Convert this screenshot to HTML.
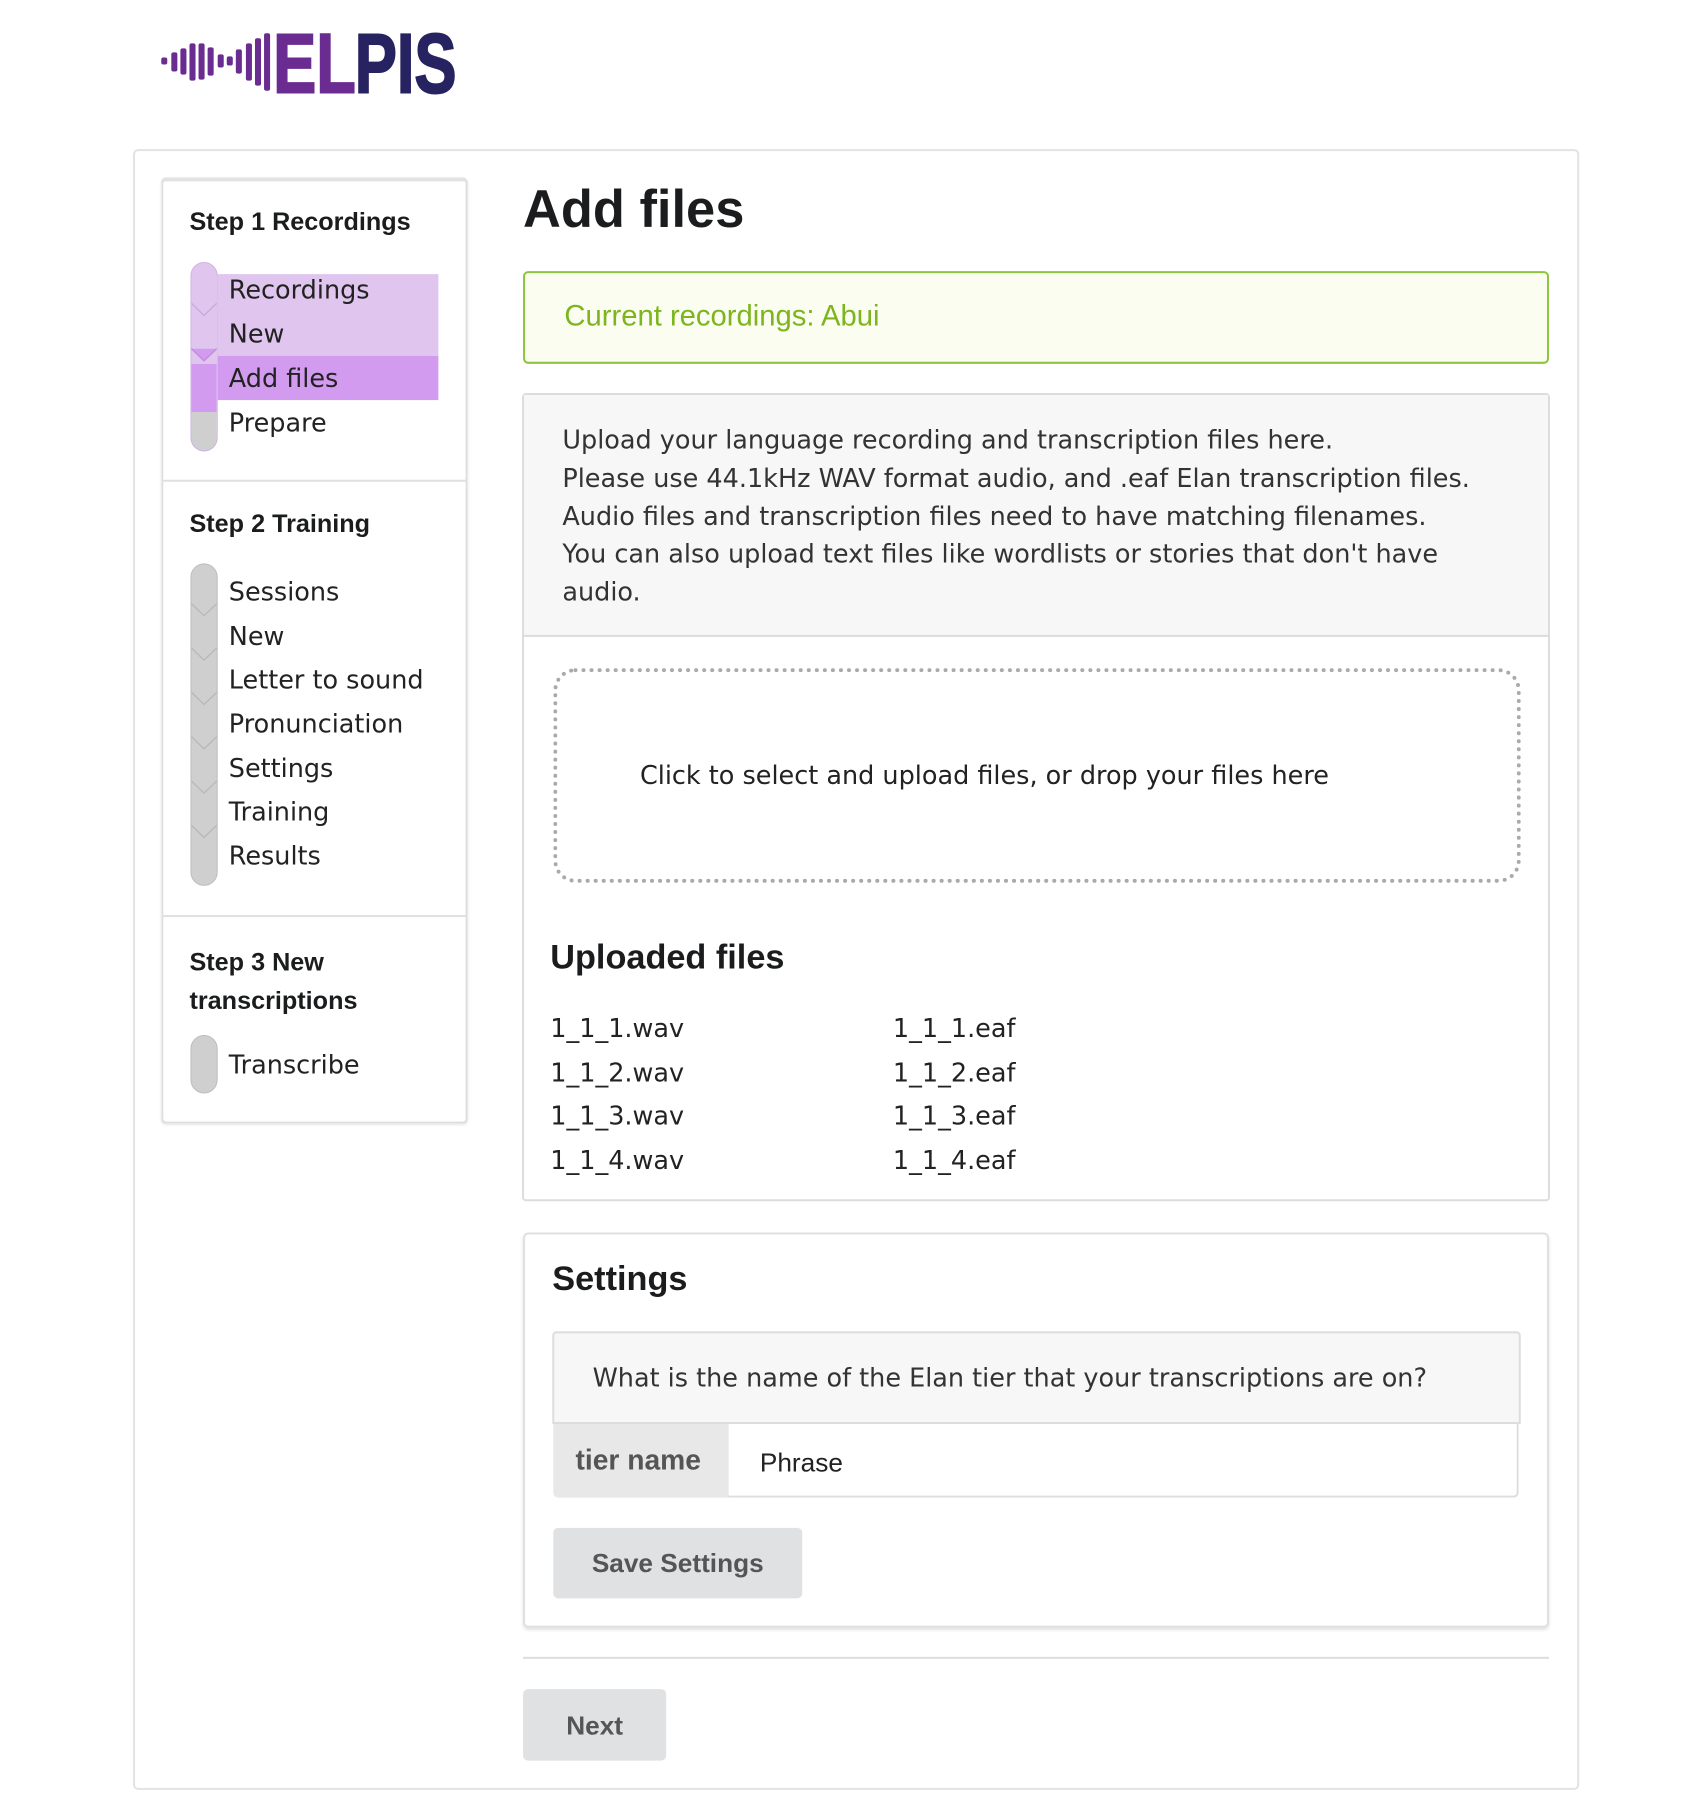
<!DOCTYPE html>
<html><head><meta charset="utf-8"><style>
*{margin:0;padding:0;box-sizing:border-box}
body{width:1708px;height:1798px;background:#fff;position:relative;overflow:hidden;font-family:"Liberation Sans",sans-serif;color:#222}
#w{position:absolute;left:0;top:0;width:1708px;height:1798px;transform:scale(1.0078);transform-origin:0 0}
.a{position:absolute}
.m{font-family:"DejaVu Sans",sans-serif;font-size:25.3px;color:#222;white-space:nowrap}
.h{font-family:"Liberation Sans",sans-serif;font-weight:bold;color:#1b1c1d;white-space:nowrap}
.bar{position:absolute;left:189px;width:27px;background:#cfcfcf;border:1.5px solid #bdbdbd;border-radius:14px}
.chev{position:absolute;left:189px;width:27px;height:14px}
.li{position:absolute;left:227px;line-height:44px;height:44px}
</style></head><body><div id="w">

<svg class="a" style="left:155px;top:25px" width="305" height="75" viewBox="155 25 305 75">
<g fill="#6a2c91">
<rect x="160" y="57" width="6" height="7" rx="2"/>
<rect x="170" y="52" width="6" height="19" rx="2"/>
<rect x="179" y="48" width="6" height="26" rx="2"/>
<rect x="188" y="43" width="6" height="37" rx="2"/>
<rect x="197" y="43" width="6" height="36" rx="2"/>
<rect x="206" y="47" width="6" height="28" rx="2"/>
<rect x="216" y="54" width="6" height="13" rx="2"/>
<rect x="225" y="56" width="6" height="9" rx="2"/>
<rect x="234" y="49" width="6" height="24" rx="2"/>
<rect x="244" y="43" width="6" height="37" rx="2"/>
<rect x="253" y="38" width="6" height="47" rx="2"/>
<rect x="262" y="33" width="6" height="57" rx="2"/>
</g>
<text x="271" y="92" font-family="Liberation Sans" font-weight="bold" font-size="84" fill="#6a2c91" stroke="#6a2c91" stroke-width="2" textLength="82" lengthAdjust="spacingAndGlyphs">EL</text>
<text x="352" y="92" font-family="Liberation Sans" font-weight="bold" font-size="84" fill="#272361" stroke="#272361" stroke-width="2" textLength="101" lengthAdjust="spacingAndGlyphs">PIS</text>
</svg>

<div class="a" style="left:132px;top:148px;width:1435px;height:1628px;border:2px solid #e3e3e3;border-radius:5px"></div>

<div class="a" style="left:160px;top:176px;width:304px;height:939px;border:2px solid #dedede;border-top:4px solid #e2e2e2;border-radius:5px;box-shadow:0 1px 2px rgba(0,0,0,.1)"></div>
<div class="a" style="left:161px;top:476px;width:302px;height:2px;background:#e0e0e0"></div>
<div class="a" style="left:161px;top:908px;width:302px;height:2px;background:#e0e0e0"></div>

<div class="a h" style="left:188px;top:206px;font-size:25px">Step 1 Recordings</div>
<div class="a" style="left:216px;top:272px;width:219px;height:81px;background:#e0c6ef"></div>
<div class="a" style="left:216px;top:353px;width:219px;height:44px;background:#d29bef"></div>
<div class="bar" style="top:260px;height:188px;background:linear-gradient(#e0c6ef 0,#e0c6ef 100px,#d29bef 100px,#d29bef 148px,#cfcfcf 148px);border-color:#cfb3e0"></div>
<svg class="chev" style="top:300px" viewBox="0 0 27 14"><path d="M1 1 L13.5 13 L26 1" fill="none" stroke="#c9addb" stroke-width="1.5"/></svg>
<svg class="chev" style="top:345px" viewBox="0 0 27 14"><path d="M1 1 L13.5 13 L26 1" fill="#d29bef" stroke="#c48ee0" stroke-width="1.5"/></svg>
<svg class="chev" style="top:395px" viewBox="0 0 27 14"><path d="M1 0 L13.5 13 L26 0 Z" fill="#d29bef"/></svg>
<div class="li m" style="top:266px">Recordings</div>
<div class="li m" style="top:310px">New</div>
<div class="li m" style="top:354px">Add files</div>
<div class="li m" style="top:398px">Prepare</div>

<div class="a h" style="left:188px;top:506px;font-size:25px">Step 2 Training</div>
<div class="bar" style="top:559px;height:320px"></div>
<svg class="chev" style="top:598px" viewBox="0 0 27 14"><path d="M1 1 L13.5 13 L26 1" fill="none" stroke="#b8b8b8" stroke-width="1.3"/></svg>
<svg class="chev" style="top:642px" viewBox="0 0 27 14"><path d="M1 1 L13.5 13 L26 1" fill="none" stroke="#b8b8b8" stroke-width="1.3"/></svg>
<svg class="chev" style="top:686px" viewBox="0 0 27 14"><path d="M1 1 L13.5 13 L26 1" fill="none" stroke="#b8b8b8" stroke-width="1.3"/></svg>
<svg class="chev" style="top:730px" viewBox="0 0 27 14"><path d="M1 1 L13.5 13 L26 1" fill="none" stroke="#b8b8b8" stroke-width="1.3"/></svg>
<svg class="chev" style="top:774px" viewBox="0 0 27 14"><path d="M1 1 L13.5 13 L26 1" fill="none" stroke="#b8b8b8" stroke-width="1.3"/></svg>
<svg class="chev" style="top:818px" viewBox="0 0 27 14"><path d="M1 1 L13.5 13 L26 1" fill="none" stroke="#b8b8b8" stroke-width="1.3"/></svg>
<div class="li m" style="top:566px">Sessions</div>
<div class="li m" style="top:610px">New</div>
<div class="li m" style="top:653px">Letter to sound</div>
<div class="li m" style="top:697px">Pronunciation</div>
<div class="li m" style="top:741px">Settings</div>
<div class="li m" style="top:784px">Training</div>
<div class="li m" style="top:828px">Results</div>

<div class="a h" style="left:188px;top:936px;font-size:25px;line-height:38px">Step 3 New<br>transcriptions</div>
<div class="bar" style="top:1027px;height:58px"></div>
<div class="li m" style="top:1035px">Transcribe</div>

<div class="a h" style="left:519px;top:178px;font-size:52px">Add files</div>
<div class="a" style="left:519px;top:269px;width:1018px;height:92px;border:2px solid #8cc63e;border-radius:5px;background:#fbfdf0"></div>
<div class="a" style="left:560px;top:298px;font-size:29px;color:#7cb51e;white-space:nowrap">Current recordings: Abui</div>

<div class="a" style="left:518px;top:390px;width:1020px;height:802px;border:2px solid #ddd;border-radius:4px"></div>
<div class="a" style="left:520px;top:392px;width:1016px;height:240px;background:#f7f7f7;border-bottom:2px solid #ddd"></div>
<div class="a m" style="left:558px;top:418px;line-height:37.8px;color:#333">Upload your language recording and transcription files here.<br>Please use 44.1kHz WAV format audio, and .eaf Elan transcription files.<br>Audio files and transcription files need to have matching filenames.<br>You can also upload text files like wordlists or stories that don't have<br>audio.</div>

<div class="a" style="left:549px;top:663px;width:960px;height:213px;border:4px dotted #aaa;border-radius:22px"></div>
<div class="a m" style="left:635px;top:755px">Click to select and upload files, or drop your files here</div>

<div class="a h" style="left:546px;top:931px;font-size:34px">Uploaded files</div>
<div class="a m" style="left:546px;top:999px;line-height:43.7px">1_1_1.wav<br>1_1_2.wav<br>1_1_3.wav<br>1_1_4.wav</div>
<div class="a m" style="left:886px;top:999px;line-height:43.7px">1_1_1.eaf<br>1_1_2.eaf<br>1_1_3.eaf<br>1_1_4.eaf</div>

<div class="a" style="left:519px;top:1223px;width:1018px;height:392px;border:2px solid #e0e0e0;border-radius:5px;box-shadow:0 2px 3px rgba(0,0,0,.12)"></div>
<div class="a h" style="left:548px;top:1250px;font-size:34px">Settings</div>
<div class="a" style="left:548px;top:1321px;width:961px;height:92px;background:#f7f7f7;border:2px solid #ddd;border-radius:4px 4px 0 0"></div>
<div class="a m" style="left:588px;top:1353px;color:#333">What is the name of the Elan tier that your transcriptions are on?</div>
<div class="a" style="left:549px;top:1413px;width:958px;height:73px;border:2px solid #ddd;border-top:none;border-radius:0 0 5px 5px"></div>
<div class="a" style="left:549px;top:1413px;width:174px;height:73px;background:#e8e8e8;border-radius:0 0 0 5px"></div>
<div class="a h" style="left:571px;top:1433px;font-size:28px;color:#555">tier name</div>
<div class="a" style="left:754px;top:1436px;font-size:26px;color:#222">Phrase</div>
<div class="a" style="left:549px;top:1516px;width:247px;height:70px;background:#e0e1e2;border-radius:5px"></div>
<div class="a h" style="left:549px;top:1536px;width:247px;text-align:center;font-size:26px;color:#555">Save Settings</div>

<div class="a" style="left:519px;top:1644px;width:1018px;height:2px;background:#ddd"></div>
<div class="a" style="left:519px;top:1676px;width:142px;height:71px;background:#e0e1e2;border-radius:5px"></div>
<div class="a h" style="left:519px;top:1697px;width:142px;text-align:center;font-size:26px;color:#555">Next</div>
</div></body></html>
